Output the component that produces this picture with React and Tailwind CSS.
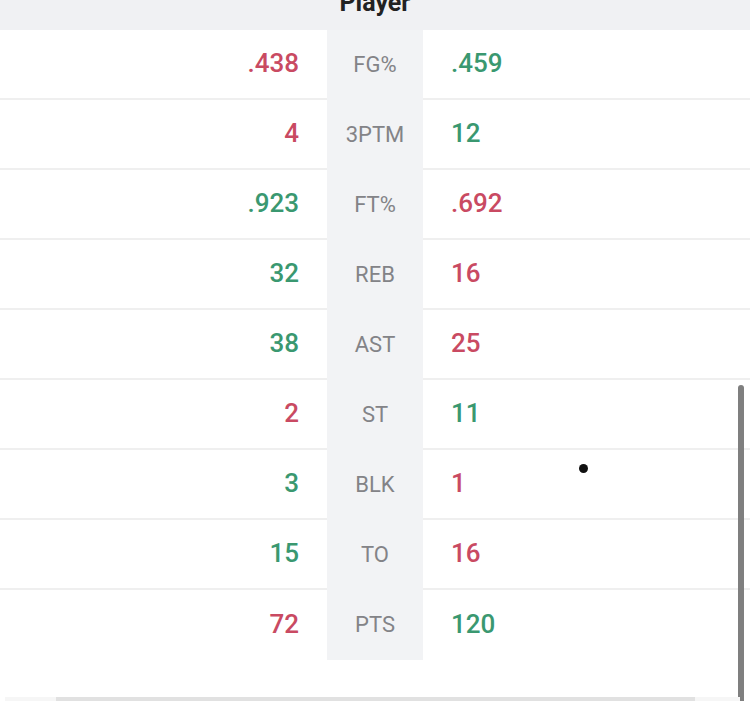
import React from 'react'

const RED = 'text-[#c94a62]'
const GREEN = 'text-[#3a9870]'

const rows = [
  { label: 'FG%', left: '.438', right: '.459', leftWins: false },
  { label: '3PTM', left: '4', right: '12', leftWins: false },
  { label: 'FT%', left: '.923', right: '.692', leftWins: true },
  { label: 'REB', left: '32', right: '16', leftWins: true },
  { label: 'AST', left: '38', right: '25', leftWins: true },
  { label: 'ST', left: '2', right: '11', leftWins: false },
  { label: 'BLK', left: '3', right: '1', leftWins: true },
  { label: 'TO', left: '15', right: '16', leftWins: true },
  { label: 'PTS', left: '72', right: '120', leftWins: false },
]

function StatRow({ row, last }) {
  const border = last ? '' : 'border-b-2 border-[#efefef]'
  return (
    <div className="flex h-[70px]">
      <div className={`flex-1 flex items-center justify-end pr-[28px] pb-[2px] text-[26px] font-medium ${border} ${row.leftWins ? GREEN : RED}`}>
        {row.left}
      </div>
      <div className="w-[96px] flex items-center justify-center bg-[#f2f3f5] pb-[2px] text-[22px] text-[#838387]">
        {row.label}
      </div>
      <div className={`flex-1 flex items-center pl-[28px] pb-[2px] text-[26px] font-medium ${border} ${row.leftWins ? RED : GREEN}`}>
        {row.right}
      </div>
    </div>
  )
}

export default function App() {
  return (
    <div className="relative w-[750px] h-[701px] overflow-hidden bg-white font-['Roboto',sans-serif]">
      <div className="h-[30px] bg-[#f0f1f3] flex items-end justify-center">
        <span className="text-[25px] font-bold text-[#222] leading-none mb-[15px]">Player</span>
      </div>
      <div className="w-[750px]">
        {rows.map((r, i) => (
          <StatRow key={r.label} row={r} last={i === rows.length - 1} />
        ))}
      </div>

      {/* vertical scrollbar */}
      <div className="absolute left-[738px] top-[385px] w-[6px] h-[330px] rounded-t-full bg-[#7f7f7f]" />
      {/* touch dot */}
      <div className="absolute left-[579px] top-[464px] w-[9px] h-[9px] rounded-full bg-[#111]" />
      {/* horizontal scrollbar */}
      <div className="absolute left-[5px] top-[697px] w-[735px] h-[4px] bg-[#f6f6f6]">
        <div className="ml-[51px] w-[639px] h-full bg-[#e1e1e1]" />
      </div>
    </div>
  )
}
